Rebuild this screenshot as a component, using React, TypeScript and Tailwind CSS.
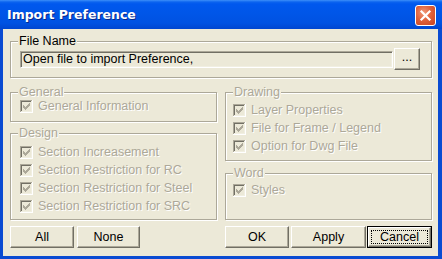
import React from "react";

const disabledText = "text-[#ACA899] [text-shadow:1px_1px_0_#fff]";

function Check() {
  const cols: [number, number][] = [
    [3, 5],
    [4, 6],
    [5, 7],
    [6, 6],
    [7, 5],
    [8, 4],
    [9, 3],
  ];
  return (
    <svg width="13" height="13" viewBox="0 0 13 13" shapeRendering="crispEdges" className="shrink-0">
      <rect x="0" y="0" width="13" height="13" fill="#ffffff" />
      <rect x="0" y="0" width="12" height="12" fill="#ACA899" />
      <rect x="1" y="1" width="11" height="11" fill="#F1EFE2" />
      <rect x="1" y="1" width="10" height="10" fill="#716F64" />
      <rect x="2" y="2" width="9" height="9" fill="#ECE9D8" />
      {cols.map(([x, y]) => (
        <rect key={x} x={x} y={y} width="1" height="3" fill="#ACA899" />
      ))}
    </svg>
  );
}

function Item({ label }: { label: string }) {
  return (
    <div className="h-[18px] flex items-center gap-[5px]">
      <Check />
      <span className={`${disabledText} whitespace-nowrap`}>{label}</span>
    </div>
  );
}

function Group({
  title,
  disabled,
  className,
  boxClass,
  children,
}: {
  title: string;
  disabled?: boolean;
  className?: string;
  boxClass?: string;
  children: React.ReactNode;
}) {
  return (
    <div className={`relative pt-[7px] flex flex-col ${className ?? ""}`}>
      <div
        className={`flex-1 border border-[#ACA899] shadow-[inset_1px_1px_0_#fff,1px_1px_0_#fff] pt-[6px] ${boxClass ?? ""}`}
      >
        {children}
      </div>
      <span
        className={`absolute top-0 left-[8px] px-[1px] leading-[14px] bg-[#ECE9D8] whitespace-nowrap ${disabled ? disabledText : "text-black"}`}
      >
        {title}
      </span>
    </div>
  );
}

function Btn({
  children,
  className,
}: {
  children: React.ReactNode;
  className?: string;
}) {
  return (
    <div
      className={`h-[22px] flex items-center justify-center bg-[#ECE9D8] border border-t-white border-l-white border-b-[#716F64] border-r-[#716F64] shadow-[inset_-1px_-1px_0_#ACA899] text-black ${className ?? ""}`}
    >
      {children}
    </div>
  );
}

export default function App() {
  return (
    <div className="w-[442px] h-[259px] flex flex-col bg-[#0A4BD2] font-['Liberation_Sans',Arial,sans-serif] text-[12.5px] select-none">
      {/* Title bar */}
      <div className="h-[29px] shrink-0 flex items-center justify-between pl-[7px] pr-[6px] pt-[2px] bg-[linear-gradient(to_bottom,#3d8ff9_0px,#0c64ef_2px,#0058ee_4px,#0056e8_45%,#0052e2_80%,#0046d0_100%)]">
        <span className="font-['DejaVu_Sans',Verdana,sans-serif] font-bold text-[12.5px] text-white [text-shadow:1px_1px_0_#0a2a8a] whitespace-nowrap">
          Import Preference
        </span>
        <div className="w-[21px] h-[21px] rounded-[3px] border border-white flex items-center justify-center bg-[radial-gradient(circle_at_40%_35%,#f09a7a_0%,#e0623c_45%,#c8421f_100%)]">
          <svg width="13" height="13" viewBox="0 0 13 13">
            <path d="M2.5 2.5 L10.5 10.5 M10.5 2.5 L2.5 10.5" stroke="#ffffff" strokeWidth="2.2" strokeLinecap="square" />
          </svg>
        </div>
      </div>

      {/* Client area */}
      <div className="flex-1 flex flex-col bg-[#ECE9D8] ml-[3px] mr-[4px] mb-[3px] pl-[7px] pr-[6px] pt-[5px]">
        <Group title="File Name" boxClass="pl-[9px] pr-[11px] pb-[7px]">
          <div className="flex items-center gap-[1px] h-[22px]">
            <div className="flex-1 h-[17px] flex items-center pl-[2px] border border-t-[#ACA899] border-l-[#ACA899] border-b-white border-r-white shadow-[inset_1px_1px_0_#716F64,inset_-1px_-1px_0_#F1EFE2] text-black whitespace-nowrap overflow-hidden">
              Open file to import Preference,
            </div>
            <Btn className="w-[26px] pb-[3px]">...</Btn>
          </div>
        </Group>

        <div className="grid grid-cols-[207px_207px] gap-x-[8px] mt-[7px]">
          <div className="flex flex-col">
            <Group title="General" disabled boxClass="pl-[9px] pb-[6px]">
              <div className="-mt-[2px]">
                <Item label="General Information" />
              </div>
            </Group>
            <Group title="Design" disabled className="mt-[4px]" boxClass="pl-[9px] pb-[4px]">
              <div className="mt-[3px]">
                <Item label="Section Increasement" />
                <Item label="Section Restriction for RC" />
                <Item label="Section Restriction for Steel" />
                <Item label="Section Restriction for SRC" />
              </div>
            </Group>
          </div>
          <div className="flex flex-col">
            <Group title="Drawing" disabled boxClass="pl-[7px] pb-[5px]">
              <div className="mt-[2px]">
                <Item label="Layer Properties" />
                <Item label="File for Frame / Legend" />
                <Item label="Option for Dwg File" />
              </div>
            </Group>
            <Group title="Word" disabled className="mt-[5px] flex-1" boxClass="pl-[7px]">
              <div className="mt-[1px]">
                <Item label="Styles" />
              </div>
            </Group>
          </div>
        </div>

        <div className="grid grid-cols-[207px_207px] gap-x-[8px] mt-[6px]">
          <div className="flex">
            <Btn className="w-[64px]">All</Btn>
            <Btn className="w-[63px] ml-[3px]">None</Btn>
          </div>
          <div className="flex">
            <Btn className="w-[64px]">OK</Btn>
            <Btn className="w-[75px] ml-[2px]">Apply</Btn>
            <div className="w-[65px] h-[22px] ml-[1px] border border-black flex">
              <div className="flex-1 flex bg-[#ECE9D8] border border-t-white border-l-white border-b-[#716F64] border-r-[#716F64] shadow-[inset_-1px_-1px_0_#ACA899] p-[2px]">
                <div className="flex-1 flex items-center justify-center border border-dotted border-black text-black">
                  Cancel
                </div>
              </div>
            </div>
          </div>
        </div>
      </div>
    </div>
  );
}
